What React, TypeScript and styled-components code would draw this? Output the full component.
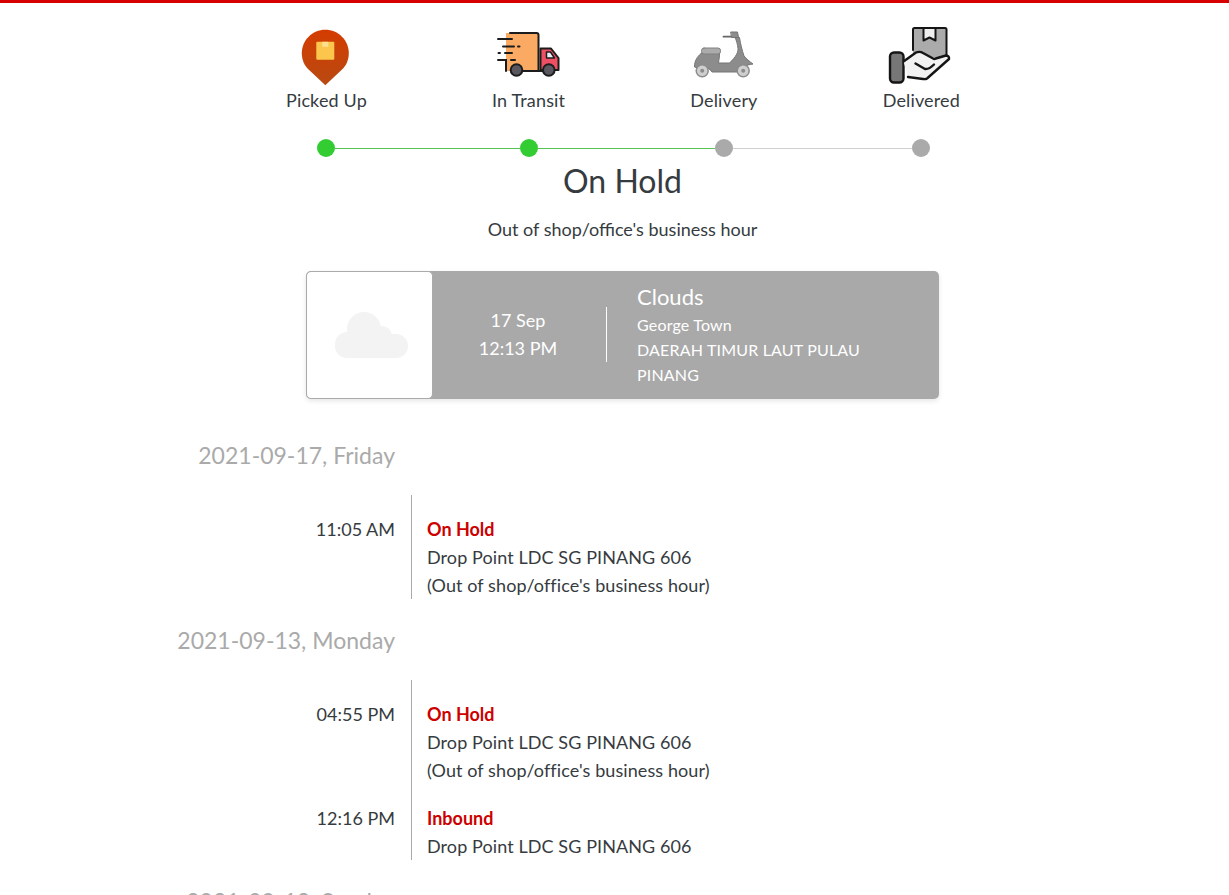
import React from "react";
import styled, { createGlobalStyle } from "styled-components";

const Global = createGlobalStyle`
  html, body { margin: 0; padding: 0; background: #fff; overflow: hidden; height: 895px; }
  body { font-family: "Lato", "Noto Sans", sans-serif; color: #363b40; }
  * { box-sizing: border-box; }
`;

const Page = styled.div`
  border-top: 3px solid #d60000;
  height: 895px;
  overflow: hidden;
  display: flex;
  flex-direction: column;
`;

const Stepper = styled.div`
  width: 674px;
  margin: 23px 0 0 286px;
  display: flex;
  justify-content: space-between;
`;

const Step = styled.div`
  display: flex;
  flex-direction: column;
  align-items: center;
`;

const IconBox = styled.div`
  width: 72px;
  height: 60px;
  margin: 0 -10px;
`;

const StepLabel = styled.div`
  font-size: 18px;
  line-height: 28px;
  letter-spacing: 0.15px;
  white-space: nowrap;
`;

const Track = styled.div`
  display: flex;
  align-items: center;
  height: 18px;
  margin: 25px 0 0 317px;
`;

const Dot = styled.span<{ $on: boolean }>`
  width: 18px;
  height: 18px;
  border-radius: 50%;
  flex: none;
  background: ${(p) => (p.$on ? "#33cc33" : "#aaaaaa")};
`;

const Segment = styled.span<{ $on: boolean; $w: number }>`
  width: ${(p) => p.$w}px;
  height: 1px;
  flex: none;
  background: ${(p) => (p.$on ? "#55c455" : "#cfcfcf")};
`;

const Title = styled.h1`
  width: 633px;
  margin: 1px 0 0 306px;
  height: 46px;
  font-size: 32px;
  font-weight: 400;
  line-height: 46px;
  text-align: center;
`;

const Subtitle = styled.p`
  width: 633px;
  margin: 11px 0 0 306px;
  font-size: 18px;
  line-height: 28px;
  text-align: center;
`;

const Card = styled.div`
  width: 633px;
  height: 128px;
  margin: 28px 0 0 306px;
  display: flex;
  background: #a9a9a9;
  border-radius: 5px;
  box-shadow: 0 2px 5px rgba(0, 0, 0, 0.1);
  color: #fff;
  flex: none;
`;

const WeatherIcon = styled.div`
  width: 127px;
  flex: none;
  background: #fff;
  border: 1px solid #aaa;
  border-radius: 5px;
  display: flex;
  align-items: center;
  justify-content: center;
  padding-left: 4px;
`;

const CardDate = styled.div`
  width: 173px;
  flex: none;
  padding: 0 3px 2px 0;
  display: flex;
  flex-direction: column;
  justify-content: center;
  align-items: center;
  font-size: 18px;
  line-height: 28px;
`;

const CardDivider = styled.span`
  width: 1px;
  height: 55px;
  margin-bottom: 2px;
  background: #fff;
  align-self: center;
  flex: none;
`;

const CardInfo = styled.div`
  padding: 10px 30px 0 30px;
  flex: 1;
  min-width: 0;
`;

const CardTitle = styled.div`
  font-size: 22px;
  line-height: 31px;
`;

const CardPlace = styled.div`
  font-size: 16px;
  line-height: 25px;
  letter-spacing: 0.18px;
`;

const Timeline = styled.div`
  margin-top: 38px;
  display: flex;
  flex-direction: column;
`;

const DayHeading = styled.div`
  width: 395px;
  height: 36px;
  font-size: 23px;
  line-height: 36px;
  text-align: right;
  color: #aaaaaa;
  margin-bottom: 22px;
`;

const DayGroup = styled.div`
  margin-bottom: 23px;
`;

const Entry = styled.div`
  display: flex;
`;

const EntryTime = styled.div`
  width: 411px;
  flex: none;
  padding: 20px 16px 0 0;
  font-size: 18px;
  line-height: 28px;
  text-align: right;
`;

const EntryBody = styled.div`
  border-left: 1px solid #aaaaaa;
  padding: 20px 0 0 15px;
  font-size: 18px;
  line-height: 28px;
  letter-spacing: 0.09px;
`;

const EntryStatus = styled.div`
  color: #cc0000;
  font-weight: 700;
  letter-spacing: 0;
`;

const PinIcon = () => (
  <svg width="72" height="60" viewBox="0 0 72 60">
    <defs>
      <linearGradient id="pinG" x1="0" y1="0" x2="0" y2="1">
        <stop offset="0" stopColor="#d43c00" />
        <stop offset="1" stopColor="#b84a12" />
      </linearGradient>
    </defs>
    <g transform="translate(-0.7 0.8)">
      <path
        d="M36 3C49 3 59.500 13.500 59.500 26.500C59.500 33 57 38.500 53 42.500L36 58.500L19 42.500C15 38.500 12.500 33 12.500 26.500C12.500 13.500 23 3 36 3Z"
        fill="url(#pinG)"
      />
      <rect x="27" y="15" width="18" height="18" rx="1" fill="#fcc64c" />
      <rect x="33" y="15" width="6" height="5" fill="#fde08e" />
    </g>
  </svg>
);

const TruckIcon = () => (
  <svg width="72" height="60" viewBox="0 0 72 60" fill="none" strokeLinecap="round">
    <path d="M13 7H43.500Q45.500 7 45.500 9V45H13V34Z" fill="#fbaa63" />
    <path d="M17 7H43.500Q45.500 7 45.500 9V44.500" stroke="#1c1c1c" strokeWidth="2" />
    <path d="M47.500 22.500H58L65.500 32V44H47.500Z" fill="#ee4f63" stroke="#1c1c1c" strokeWidth="2" strokeLinejoin="round" />
    <path d="M53.500 26H57.500L61.500 32H53.500Z" fill="#e8f1f6" stroke="#1c1c1c" strokeWidth="1.500" strokeLinejoin="round" />
    <path d="M30 45H50" stroke="#1c1c1c" strokeWidth="2" />
    <path d="M5 13H19M10 20.500H21M25 20.500H26.500M5.500 27H7M12 27H19M5 34H13V45M18 34H22" stroke="#1c1c1c" strokeWidth="2" />
    <circle cx="23.500" cy="44" r="5.800" fill="#5a5760" stroke="#1c1c1c" strokeWidth="2" />
    <circle cx="55.800" cy="44" r="5.800" fill="#5a5760" stroke="#1c1c1c" strokeWidth="2" />
  </svg>
);

const ScooterIcon = () => (
  <svg width="72" height="60" viewBox="0 0 72 60" fill="none" strokeLinecap="round" strokeLinejoin="round">
    <path d="M35.500 10.700H46" stroke="#666" strokeWidth="1.800" />
    <path d="M43 6H49.500L50.500 11.500H44Z" fill="#8d8d8d" stroke="#757575" strokeWidth="1" />
    <path
      d="M47 11.500H51.500C52.500 18 54 24 56 30C58.500 33 61 35 65 38C62 38.500 58.500 39 55 41C52 41 50 43 49.500 46H24C22 42.500 17 40.500 13 41C10 41.500 8 42 6.500 41C6.500 35 9 31 13 27.500H31.500C31.500 31 31 33 30.500 37H41.500C45 33.500 50.500 28 50 22.500C49.500 18 48.500 14.500 47 11.500Z"
      fill="#8c8c8c"
      stroke="#757575"
      strokeWidth="1"
    />
    <rect x="13.500" y="22" width="19" height="6" rx="2.500" fill="#ababab" stroke="#808080" strokeWidth="1" />
    <circle cx="14.200" cy="44.700" r="6" fill="#cfcfcf" stroke="#8c8c8c" strokeWidth="1.500" />
    <circle cx="14.200" cy="44.700" r="2" fill="#8c8c8c" />
    <circle cx="55.200" cy="44.700" r="6" fill="#cfcfcf" stroke="#8c8c8c" strokeWidth="1.500" />
    <circle cx="55.200" cy="44.700" r="2" fill="#8c8c8c" />
  </svg>
);

const HandIcon = () => (
  <svg width="72" height="60" viewBox="0 0 72 60" fill="none" strokeLinecap="round" strokeLinejoin="round">
    <g transform="translate(-1 0)">
      <path d="M29 2H62.500V31H29Z" fill="#ababab" />
      <path d="M29 24V3.500Q29 2 30.500 2H61Q62.500 2 62.500 3.500V29.500" stroke="#151515" strokeWidth="2" />
      <path d="M39.500 2V14.500L45.500 11.500L51.500 14.500V2Z" fill="#efefef" stroke="#151515" strokeWidth="2" />
      <rect x="6" y="26.500" width="13.500" height="30" rx="4" fill="#777777" stroke="#151515" strokeWidth="2.400" />
      <path
        d="M19.500 35.500L32 26.500Q36 25 39 27L50 33L62 29.500Q65.500 30 65 33L43 52.500Q41.500 53.500 39 53L24 51"
        fill="#f2f2f2"
        stroke="#151515"
        strokeWidth="2.400"
      />
      <path d="M31.500 37.500L41 43Q45 43.500 50 38.500" stroke="#151515" strokeWidth="2.400" />
    </g>
  </svg>
);

const CloudIcon = () => (
  <svg width="76" height="48" viewBox="0 0 76 48">
    <g fill="#f3f3f3">
      <rect x="1" y="23" width="73" height="24" rx="12" />
      <circle cx="30" cy="18" r="17" />
      <circle cx="48" cy="25" r="10" />
      <circle cx="13" cy="33" r="12" />
    </g>
  </svg>
);

const steps = [
  { label: "Picked Up", Icon: PinIcon },
  { label: "In Transit", Icon: TruckIcon },
  { label: "Delivery", Icon: ScooterIcon },
  { label: "Delivered", Icon: HandIcon },
];

const days = [
  {
    date: "2021-09-17, Friday",
    entries: [
      { time: "11:05 AM", status: "On Hold", lines: ["Drop Point LDC SG PINANG 606", "(Out of shop/office's business hour)"] },
    ],
  },
  {
    date: "2021-09-13, Monday",
    entries: [
      { time: "04:55 PM", status: "On Hold", lines: ["Drop Point LDC SG PINANG 606", "(Out of shop/office's business hour)"] },
      { time: "12:16 PM", status: "Inbound", lines: ["Drop Point LDC SG PINANG 606"] },
    ],
  },
  { date: "2021-09-12, Sunday", entries: [] },
];

export default function App() {
  return (
    <Page>
      <Global />
      <Stepper>
        {steps.map(({ label, Icon }) => (
          <Step key={label}>
            <IconBox>
              <Icon />
            </IconBox>
            <StepLabel>{label}</StepLabel>
          </Step>
        ))}
      </Stepper>
      <Track>
        <Dot $on />
        <Segment $on $w={184.5} />
        <Dot $on />
        <Segment $on $w={177.5} />
        <Dot $on={false} />
        <Segment $on={false} $w={179} />
        <Dot $on={false} />
      </Track>
      <Title>On Hold</Title>
      <Subtitle>Out of shop/office's business hour</Subtitle>
      <Card>
        <WeatherIcon>
          <CloudIcon />
        </WeatherIcon>
        <CardDate>
          <div>17 Sep</div>
          <div>12:13 PM</div>
        </CardDate>
        <CardDivider />
        <CardInfo>
          <CardTitle>Clouds</CardTitle>
          <CardPlace>George Town</CardPlace>
          <CardPlace>DAERAH TIMUR LAUT PULAU PINANG</CardPlace>
        </CardInfo>
      </Card>
      <Timeline>
        {days.map((d) => (
          <DayGroup key={d.date}>
            <DayHeading>{d.date}</DayHeading>
            {d.entries.map((e) => (
              <Entry key={e.time}>
                <EntryTime>{e.time}</EntryTime>
                <EntryBody>
                  <EntryStatus>{e.status}</EntryStatus>
                  {e.lines.map((l) => (
                    <div key={l}>{l}</div>
                  ))}
                </EntryBody>
              </Entry>
            ))}
          </DayGroup>
        ))}
      </Timeline>
    </Page>
  );
}
